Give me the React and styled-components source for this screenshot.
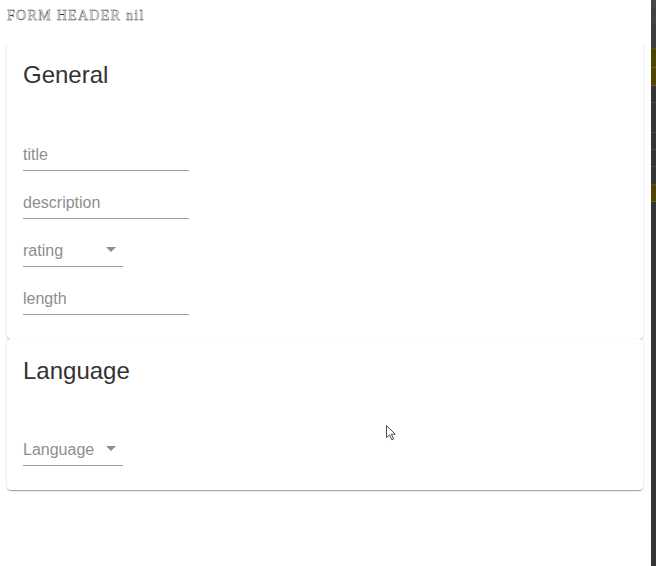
import styled, { createGlobalStyle } from 'styled-components';

const GlobalStyle = createGlobalStyle`
  html, body {
    margin: 0;
    padding: 0;
    background: #ffffff;
  }
  body {
    font-family: "Liberation Sans", Arial, sans-serif;
  }
`;

// Styled components
const Screen = styled.div`
  display: flex;
  width: 656px;
  height: 566px;
  overflow: hidden;
  position: relative;
`;

const Main = styled.div`
  flex: 1;
  display: flex;
  flex-direction: column;
  background: #ffffff;
`;

const FormHeader = styled.div`
  position: relative;
  z-index: 1;
  height: 44px;
  padding: 8px 0 0 7px;
  box-sizing: border-box;
  background: #ffffff;
  font-family: "Liberation Serif", serif;
  font-size: 14px;
  line-height: 16px;
  letter-spacing: 1.3px;
  color: #ffffff;
  -webkit-text-stroke: 0.4px #3a3a3a;
`;

const Card = styled.section`
  margin: 0 8px 0 7px;
  padding: 16px;
  background: #ffffff;
  border-radius: 4px;
  box-shadow: 0 2px 1px -1px rgba(0, 0, 0, 0.2), 0 1px 1px 0 rgba(0, 0, 0, 0.14),
    0 1px 3px 0 rgba(0, 0, 0, 0.12);
  display: flex;
  flex-direction: column;
  align-items: flex-start;
  margin-top: ${({ $first }) => ($first ? '-1px' : '0')};
`;

const Heading = styled.h2`
  margin: 0 0 ${({ $gap }) => $gap || 32}px;
  font-family: "Liberation Sans", Arial, sans-serif;
  font-weight: 400;
  font-size: 24px;
  line-height: 32px;
  color: #333333;
`;

const Fields = styled.div`
  display: flex;
  flex-direction: column;
  margin-bottom: 8px;
`;

const Field = styled.div`
  position: relative;
  width: ${({ $select }) => ($select ? '100px' : '166px')};
  height: 48px;
  box-sizing: border-box;
  padding-bottom: 6px;
  border-bottom: 1px solid #a0a0a0;
  display: flex;
  align-items: flex-end;
  font-size: 16px;
  line-height: 19px;
  color: #8e8e8e;
`;

const Arrow = styled.svg`
  position: absolute;
  right: 0;
  bottom: 5px;
  width: 24px;
  height: 24px;
  fill: #8e8e8e;
`;

const Strip = styled.div`
  width: 5px;
  display: flex;
  flex-direction: column;
  background: #353535;
`;

const Segment = styled.div`
  height: ${({ $h }) => $h}px;
  background: ${({ $c }) => $c};
  border-bottom: 1px solid ${({ $line }) => $line || '#4a4a4a'};
  box-sizing: border-box;
`;

const Pointer = styled.svg`
  position: absolute;
  left: 386px;
  top: 425px;
  width: 10px;
  height: 16px;
`;

const segments = [
  { h: 7, c: '#474747' },
  { h: 16, c: '#424242' },
  { h: 26, c: '#3d3d3d', line: '#5a5120' },
  { h: 19, c: '#4d4504', line: '#6a5e1a' },
  { h: 18, c: '#4d4504', line: '#6a5e1a' },
  { h: 17, c: '#353535' },
  { h: 30, c: '#353535' },
  { h: 17, c: '#353535' },
  { h: 17, c: '#353535' },
  { h: 18, c: '#353535', line: '#5a5120' },
  { h: 17, c: '#4d4504', line: '#6a5e1a' },
];

const DropArrow = () => (
  <Arrow viewBox="0 0 24 24">
    <path d="M7 10l5 5 5-5z" />
  </Arrow>
);

const App = () => {
  return (
    <>
      <GlobalStyle />
      <Screen>
        <Main>
          <FormHeader>FORM HEADER nil</FormHeader>
          <Card $first>
            <Heading>General</Heading>
            <Fields>
              <Field>title</Field>
              <Field>description</Field>
              <Field $select>
                rating
                <DropArrow />
              </Field>
              <Field>length</Field>
            </Fields>
          </Card>
          <Card>
            <Heading $gap={31}>Language</Heading>
            <Fields>
              <Field $select>
                Language
                <DropArrow />
              </Field>
            </Fields>
          </Card>
        </Main>
        <Strip>
          {segments.map((s, i) => (
            <Segment key={i} $h={s.h} $c={s.c} $line={s.line} />
          ))}
        </Strip>
        <Pointer viewBox="0 0 10 16">
          <path d="M0.5 0.5 L0.5 12.5 L3.5 9.8 L5.8 14.8 L7.6 14 L5.4 9.2 L9.2 9.2 Z" fill="#ffffff" stroke="#222" strokeWidth="0.8" />
        </Pointer>
      </Screen>
    </>
  );
};

export default App;
